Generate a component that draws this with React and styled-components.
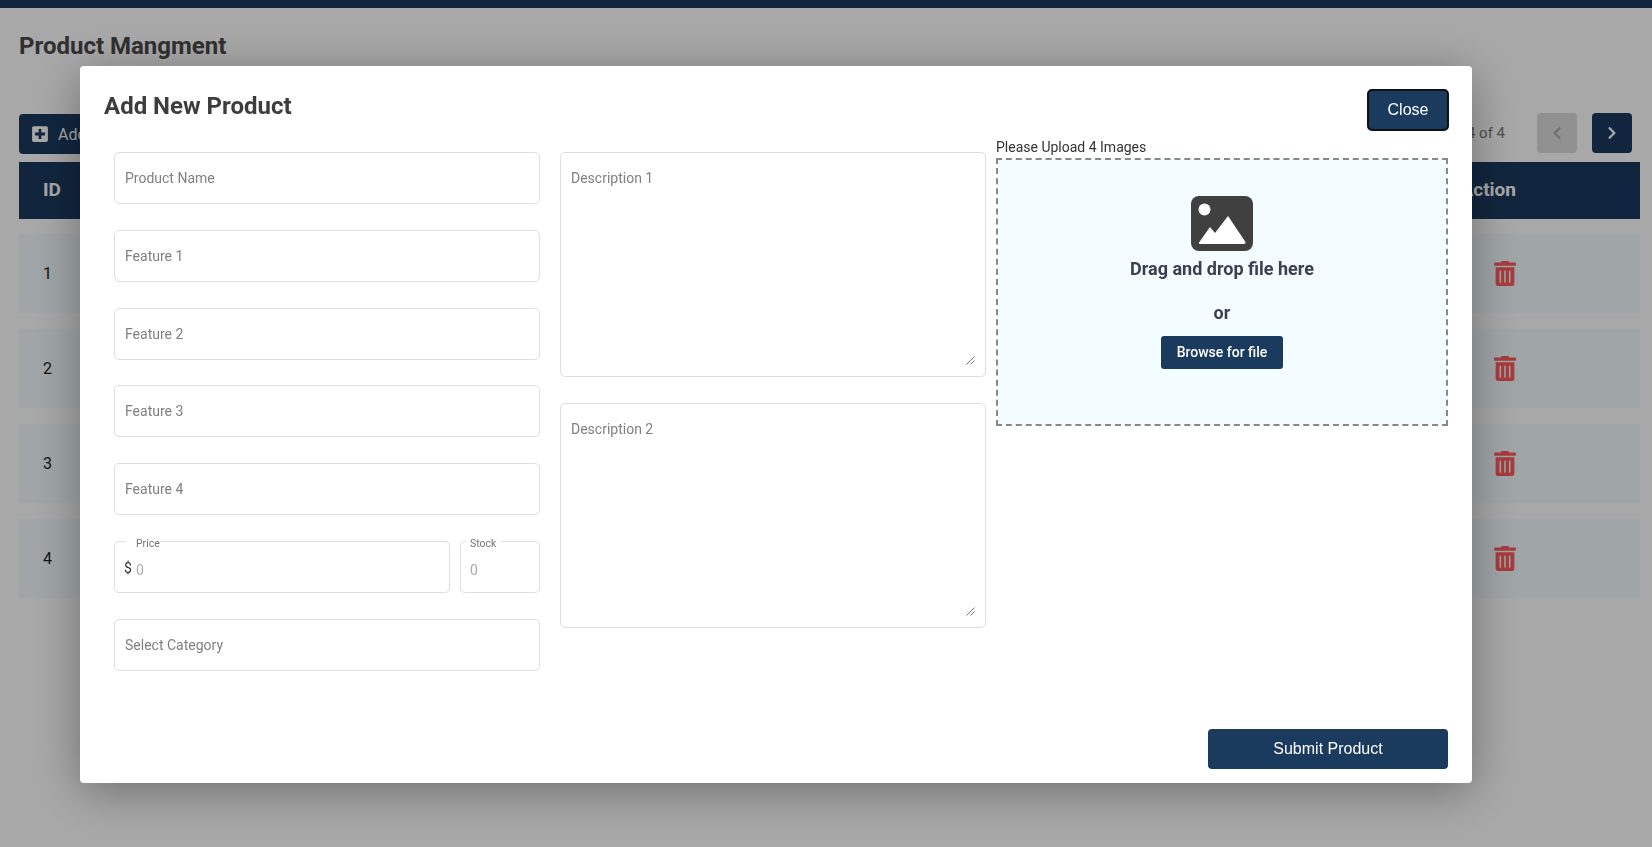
import React from "react";
import styled, { createGlobalStyle } from "styled-components";
import { FaPlusSquare, FaTrashAlt, FaChevronLeft, FaChevronRight } from "react-icons/fa";

const GlobalStyle = createGlobalStyle`
  * { box-sizing: border-box; }
  html, body {
    margin: 0;
    height: 100%;
    overflow: hidden;
    background: #fff;
    font-family: Roboto, "Liberation Sans", sans-serif;
  }
`;

const rows = [1, 2, 3, 4];

const Description = ({ label }) => (
  <TextAreaWrap>
    <TextArea placeholder={label} />
    <ResizeGrip width="9" height="9" viewBox="0 0 9 9">
      <path d="M0.5 8.5 L8.5 0.5 M4.5 8.5 L8.5 4.5" stroke="#555" strokeWidth="0.8" fill="none" />
    </ResizeGrip>
  </TextAreaWrap>
);

const App = () => (
  <>
    <GlobalStyle />
    <Page>
      <TopBar />
      <Content>
        <PageTitle>Product Mangment</PageTitle>
        <Toolbar>
          <AddButton><FaPlusSquare size={18} /> Add Product</AddButton>
          <Pager>
            <PagerText>1-4 of 4</PagerText>
            <PagerButton disabled><FaChevronLeft size={14} /></PagerButton>
            <PagerButton><FaChevronRight size={14} /></PagerButton>
          </Pager>
        </Toolbar>
        <TableHead>
          <span>ID</span>
          <span>Action</span>
        </TableHead>
        <TableBody>
          {rows.map((id) => (
            <TableRow key={id}>
              <span>{id}</span>
              <TrashCell><FaTrashAlt size={25} /></TrashCell>
            </TableRow>
          ))}
        </TableBody>
      </Content>
    </Page>

    <Overlay>
      <Modal>
        <ModalHeader>
          <ModalTitle>Add New Product</ModalTitle>
          <CloseButton>Close</CloseButton>
        </ModalHeader>

        <FormColumns>
          <FieldColumn>
            <TextInput placeholder="Product Name" />
            <TextInput placeholder="Feature 1" />
            <TextInput placeholder="Feature 2" />
            <TextInput placeholder="Feature 3" />
            <TextInput placeholder="Feature 4" />
            <PriceRow>
              <PriceBox>
                <PriceLegend>Price</PriceLegend>
                <Currency>$</Currency>
                <BareInput placeholder="0" />
              </PriceBox>
              <StockBox>
                <StockLegend>Stock</StockLegend>
                <BareInput placeholder="0" />
              </StockBox>
            </PriceRow>
            <TextInput placeholder="Select Category" />
          </FieldColumn>

          <DescriptionColumn>
            <Description label="Description 1" />
            <Description label="Description 2" />
          </DescriptionColumn>

          <UploadColumn>
            <UploadLabel>Please Upload 4 Images</UploadLabel>
            <DropZone>
              <svg width="62" height="55" viewBox="0 0 62 55">
                <rect width="62" height="55" rx="8" fill="#404040" />
                <circle cx="13.5" cy="13.5" r="6" fill="#fff" />
                <path
                  d="M8 46.5 L19 31 L24 37 L37 20 L54.5 46 Q55 48 53 48 L9 48 Q7.5 48 8 46.5 Z"
                  fill="#fff"
                />
              </svg>
              <DropText>Drag and drop file here</DropText>
              <OrText>or</OrText>
              <BrowseButton>Browse for file</BrowseButton>
            </DropZone>
          </UploadColumn>
        </FormColumns>

        <ModalFooter>
          <SubmitButton>Submit Product</SubmitButton>
        </ModalFooter>
      </Modal>
    </Overlay>
  </>
);

export default App;

// Page behind the modal
const Page = styled.div`
  height: 100vh;
`;

const TopBar = styled.div`
  height: 8px;
  background: #1a3a5e;
`;

const Content = styled.div`
  padding: 0 12px 0 19px;
`;

const PageTitle = styled.h1`
  margin: 0;
  padding-top: 23px;
  height: 106px;
  font-size: 24px;
  line-height: 30px;
  font-weight: 700;
  color: #4a4a4a;
`;

const Toolbar = styled.div`
  display: flex;
  justify-content: space-between;
  align-items: center;
  height: 40px;
  margin-bottom: 8px;
`;

const AddButton = styled.button`
  display: flex;
  align-items: center;
  gap: 9px;
  height: 40px;
  padding: 0 12px;
  border: none;
  border-radius: 4px;
  background: #1a3a5e;
  color: #fff;
  font-family: Roboto, sans-serif;
  font-size: 16px;
`;

const Pager = styled.div`
  display: flex;
  align-items: center;
  padding-right: 8px;
  margin-bottom: 2px;
`;

const PagerText = styled.span`
  font-size: 15px;
  color: #777;
  margin-right: 32px;
`;

const PagerButton = styled.button`
  display: flex;
  align-items: center;
  justify-content: center;
  width: 40px;
  height: 40px;
  margin-left: 15px;
  border: none;
  border-radius: 4px;
  background: ${(props) => (props.disabled ? "#dcdcdc" : "#1a3a5e")};
  color: ${(props) => (props.disabled ? "#aaa" : "#fff")};

  &:first-of-type {
    margin-left: 0;
  }
`;

const TableHead = styled.div`
  display: flex;
  justify-content: space-between;
  align-items: center;
  height: 57px;
  padding: 0 124px 2px 24px;
  background: #1a3a5e;
  color: #fff;
  font-size: 19px;
  font-weight: 700;
`;

const TableBody = styled.div`
  display: flex;
  flex-direction: column;
  gap: 16px;
  margin-top: 15px;
`;

const TableRow = styled.div`
  display: flex;
  justify-content: space-between;
  align-items: center;
  height: 79px;
  padding: 0 124px 0 24px;
  background: #f3fbfd;
  color: #222;
  font-size: 16px;
`;

const TrashCell = styled.span`
  display: flex;
  width: 22px;
  color: #ff5a5e;
`;

// Modal
const Overlay = styled.div`
  position: fixed;
  inset: 0;
  display: flex;
  padding: 66px 180px 64px 80px;
  background: rgba(0, 0, 0, 0.34);
`;

const Modal = styled.div`
  flex: 1;
  min-width: 0;
  display: flex;
  flex-direction: column;
  padding: 23px 24px 14px;
  border-radius: 4px;
  background: #fff;
  box-shadow: 0 8px 48px rgba(0, 0, 0, 0.35);
`;

const ModalHeader = styled.div`
  display: flex;
  justify-content: space-between;
  align-items: flex-start;
  height: 42px;
`;

const ModalTitle = styled.h2`
  margin: 0;
  font-size: 24px;
  line-height: 34px;
  font-weight: 700;
  color: #3d3d3d;
`;

const CloseButton = styled.button`
  width: 82px;
  height: 42px;
  margin-right: -1px;
  border: 2px solid #111;
  border-radius: 5px;
  background: #1a3a5e;
  color: #fff;
  font-family: "Liberation Sans", Arial, sans-serif;
  font-size: 16px;
`;

const FormColumns = styled.div`
  flex: 1;
  display: flex;
  gap: 10px;
  margin-top: 9px;
  padding-left: 10px;
`;

const FieldColumn = styled.div`
  flex: 0 0 426px;
  display: flex;
  flex-direction: column;
  gap: 25.8px;
  padding-top: 12px;
`;

const DescriptionColumn = styled.div`
  flex: 0 0 426px;
  display: flex;
  flex-direction: column;
  gap: 26px;
  margin-left: 10px;
  padding-top: 12px;
`;

const UploadColumn = styled.div`
  flex: 0 0 452px;
  display: flex;
  flex-direction: column;
`;

const TextInput = styled.input`
  width: 100%;
  height: 52px;
  padding: 0 10px;
  border: 1px solid #dedede;
  border-radius: 5px;
  outline: none;
  background: #fff;
  font-family: Roboto, sans-serif;
  font-size: 14px;
  color: #333;

  &::placeholder {
    color: #808080;
  }
`;

const TextAreaWrap = styled.div`
  position: relative;
  height: 225px;
`;

const TextArea = styled.textarea`
  display: block;
  width: 100%;
  height: 100%;
  padding: 17px 10px 10px;
  border: 1px solid #dedede;
  border-radius: 5px;
  outline: none;
  background: #fff;
  resize: none;
  font-family: Roboto, sans-serif;
  font-size: 14px;
  line-height: 17px;

  &::placeholder {
    color: #808080;
  }
`;

const ResizeGrip = styled.svg`
  position: absolute;
  right: 11px;
  bottom: 12px;
`;

const PriceRow = styled.div`
  display: flex;
  gap: 10px;
`;

const LegendBox = styled.div`
  position: relative;
  display: flex;
  align-items: center;
  gap: 4px;
  height: 52px;
  padding: 6px 9px 0;
  border: 1px solid #dedede;
  border-radius: 5px;
`;

const PriceBox = styled(LegendBox)`
  flex: 1 1 0;
  min-width: 0;
`;

const StockBox = styled(LegendBox)`
  flex: 0 0 80px;
  width: 80px;
`;

const Legend = styled.span`
  position: absolute;
  top: -4px;
  background: #fff;
  font-size: 10.5px;
  line-height: 11px;
  color: #757575;
`;

const PriceLegend = styled(Legend)`
  left: 11px;
  padding: 0 0 0 10px;
`;

const StockLegend = styled(Legend)`
  left: 6px;
  padding: 0 5px 0 3px;
`;

const Currency = styled.span`
  margin-top: -4px;
  font-size: 14px;
  color: #333;
`;

const BareInput = styled.input`
  flex: 1;
  min-width: 0;
  padding: 0;
  border: none;
  outline: none;
  font-family: Roboto, sans-serif;
  font-size: 14px;

  &::placeholder {
    color: #aaa;
  }
`;

const UploadLabel = styled.div`
  height: 18px;
  font-size: 14px;
  line-height: 15px;
  color: #333;
`;

const DropZone = styled.div`
  height: 268px;
  display: flex;
  flex-direction: column;
  align-items: center;
  padding-top: 36px;
  border: 2px dashed #888;
  background: #f3fcff;
`;

const DropText = styled.div`
  margin-top: 6px;
  font-size: 18px;
  line-height: 24px;
  font-weight: 700;
  color: #374151;
`;

const OrText = styled.div`
  margin-top: 20px;
  font-size: 18px;
  line-height: 24px;
  font-weight: 700;
  color: #374151;
`;

const BrowseButton = styled.button`
  width: 122px;
  height: 33px;
  margin-top: 11px;
  padding: 0 0 2px;
  border: none;
  border-radius: 3px;
  background: #1a3a5e;
  color: #fff;
  font-family: Roboto, sans-serif;
  font-size: 14px;
  font-weight: 500;
`;

const ModalFooter = styled.div`
  display: flex;
  justify-content: flex-end;
`;

const SubmitButton = styled.button`
  width: 240px;
  height: 40px;
  border: none;
  border-radius: 4px;
  background: #1a3a5e;
  color: #fff;
  font-family: "Liberation Sans", Arial, sans-serif;
  font-size: 16px;
`;
